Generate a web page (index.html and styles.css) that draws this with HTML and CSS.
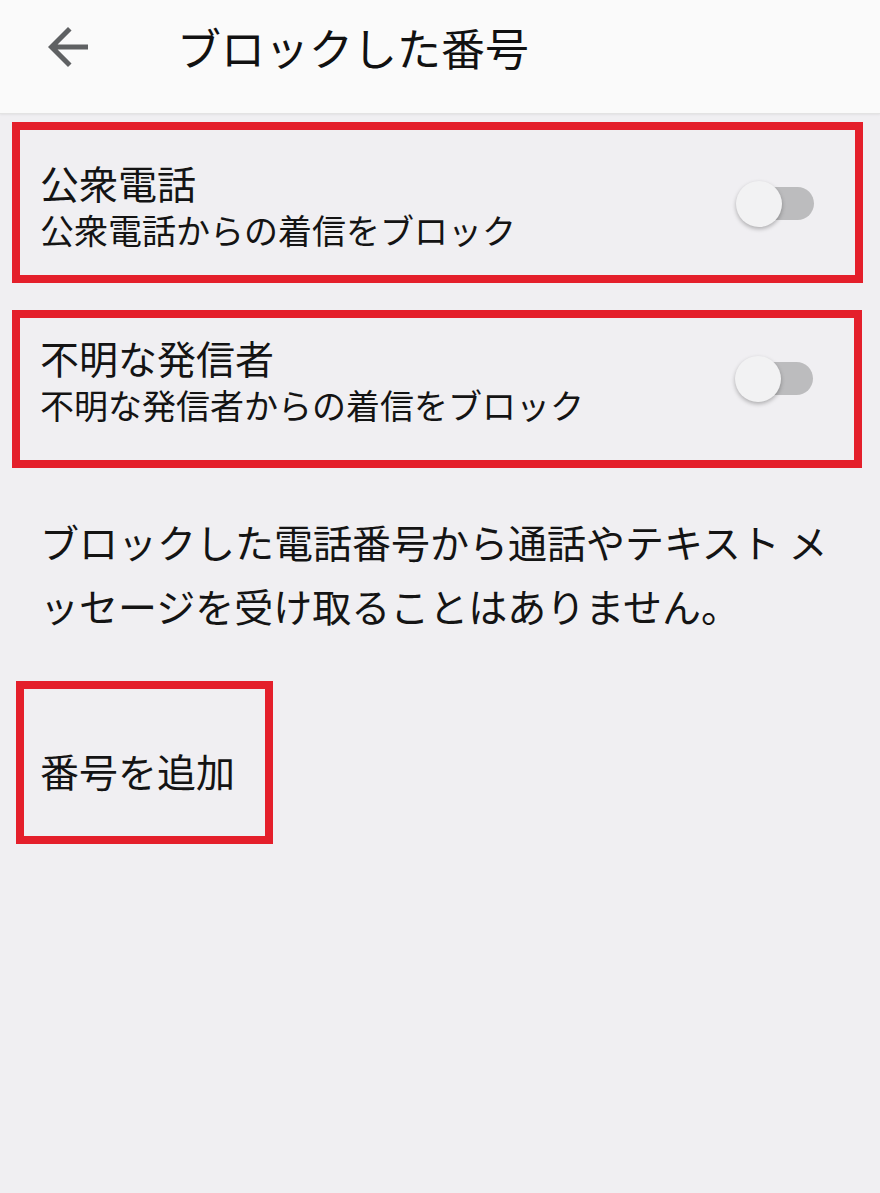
FILE: index.html
```html
<!DOCTYPE html>
<html lang="ja">
<head>
<meta charset="utf-8">
<title>ブロックした番号</title>
<link rel="stylesheet" href="styles.css">
</head>
<body>
<header class="appbar">
  <button class="back" aria-label="戻る">
    <svg viewBox="0 0 24 24" width="60" height="60"><path d="M20 11H7.83l5.59-5.59L12 4l-8 8 8 8 1.41-1.41L7.83 13H20v-2z" fill="#5f6163"/></svg>
  </button>
  <h1 class="appbar-title">ブロックした番号</h1>
</header>
<main class="content">
  <section class="setting setting--first">
    <div class="setting-text">
      <div class="setting-title">公衆電話</div>
      <div class="setting-sub">公衆電話からの着信をブロック</div>
    </div>
    <span class="switch"><span class="track"></span><span class="thumb"></span></span>
  </section>
  <section class="setting setting--second">
    <div class="setting-text">
      <div class="setting-title">不明な発信者</div>
      <div class="setting-sub">不明な発信者からの着信をブロック</div>
    </div>
    <span class="switch"><span class="track"></span><span class="thumb"></span></span>
  </section>
  <p class="note">ブロックした電話番号から通話やテキスト メ<br>ッセージを受け取ることはありません。</p>
  <div class="add">番号を追加</div>
</main>
</body>
</html>
```
FILE: styles.css
```css
* { box-sizing: border-box; }
html, body {
  margin: 0;
  padding: 0;
  background: #f0eff2;
  font-family: "Noto Sans CJK JP", "Noto Sans", sans-serif;
  color: #141414;
}
.appbar {
  height: 114px;
  background: #fafafa;
  border-bottom: 1px solid #e3e3e3;
  box-shadow: 0 1px 2px rgba(0,0,0,0.06);
  display: flex;
  align-items: center;
  padding-bottom: 20px;
}
.back {
  border: 0;
  background: none;
  padding: 0;
  margin-left: 38px;
  width: 60px;
  height: 60px;
  display: flex;
}
.appbar-title {
  margin: 0 0 0 79px;
  font-size: 44px;
  font-weight: 400;
  line-height: 50px;
  color: #111;
}
.content {
  display: flex;
  flex-direction: column;
  align-items: flex-start;
}
.setting {
  display: flex;
  align-items: center;
  border: 8px solid #e41f2b;
  margin-left: 12px;
  width: 851px;
  padding-left: 20px;
  padding-right: 41px;
}
.setting--first {
  margin-top: 8px;
  padding-top: 28px;
  padding-bottom: 21px;
}
.setting--second {
  margin-top: 27px;
  width: 850px;
  padding-top: 15px;
  padding-bottom: 31px;
}
.setting-text { flex: 1; }
.setting-title {
  font-size: 39px;
  line-height: 48px;
}
.setting-sub {
  font-size: 34px;
  line-height: 48px;
}
.switch {
  position: relative;
  width: 78px;
  height: 44px;
  margin-bottom: 6px;
  flex: none;
}
.track {
  position: absolute;
  right: 0;
  top: 6px;
  width: 64px;
  height: 33px;
  border-radius: 17px;
  background: #bcbcbe;
}
.thumb {
  position: absolute;
  left: 0;
  top: 0;
  width: 46px;
  height: 46px;
  border-radius: 50%;
  background: #f2f2f3;
  box-shadow: 0 2px 4px rgba(0,0,0,0.28);
}
.note {
  margin: 41px 0 0 0;
  padding-left: 40px;
  font-size: 39px;
  line-height: 64px;
}
.add {
  margin-top: 44px;
  margin-left: 16px;
  width: 257px;
  border: 8px solid #e41f2b;
  padding: 56px 0 41px 16px;
  font-size: 39px;
  line-height: 50px;
}
```
